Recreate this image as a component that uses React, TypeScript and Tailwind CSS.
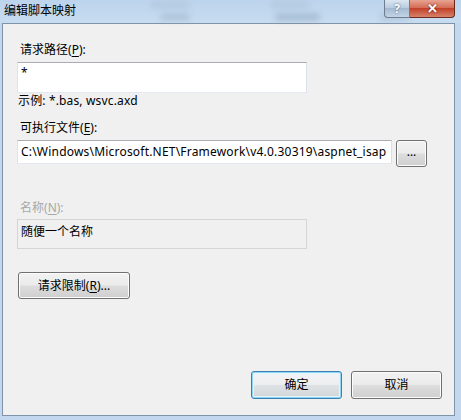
import type { ReactNode } from "react";

const font = {
  fontFamily: '"Noto Sans", "Noto Sans CJK SC", sans-serif',
};

function Mnemonic({ label, k, tail = "):" }: { label: string; k: string; tail?: string }) {
  return (
    <>
      {label}(<span className="underline underline-offset-2">{k}</span>
      {tail}
    </>
  );
}

function WinButton({
  children,
  primary,
  className = "",
}: {
  children: ReactNode;
  primary?: boolean;
  className?: string;
}) {
  const base = primary
    ? "border-[#3c7fb1] shadow-[inset_0_0_0_1px_#8fd6f4,inset_0_0_0_2px_#e3f4fb] bg-[linear-gradient(to_bottom,#f2f4f5_0%,#eceeef_48%,#dfe2e4_52%,#d2d6d9_100%)]"
    : "border-[#707070] shadow-[inset_0_0_0_1px_#fcfcfc] bg-[linear-gradient(to_bottom,#f2f2f2_0%,#ebebeb_48%,#dddddd_52%,#cfcfcf_100%)]";
  return (
    <button
      className={`flex items-center justify-center rounded-[3px] border text-[12px] text-black ${base} ${className}`}
    >
      {children}
    </button>
  );
}

export default function App() {
  return (
    <div
      className="relative flex h-[420px] w-[461px] flex-col overflow-hidden bg-[#c3d8ee]"
      style={font}
    >
      {/* title bar */}
      <div className="relative flex h-[23px] shrink-0 items-start bg-[linear-gradient(to_bottom,#bcd4ec,#c8dcf0)]">
        <div className="absolute left-[150px] top-[2px] h-[6px] w-[40px] rounded-full bg-[#9fb3c8] opacity-40 blur-[3px]" />
        <div className="absolute left-[270px] top-[2px] h-[6px] w-[40px] rounded-full bg-[#9fb3c8] opacity-40 blur-[3px]" />
        <div className="absolute left-[160px] top-[14px] h-[6px] w-[30px] rounded-full bg-[#8ea4bb] opacity-50 blur-[3px]" />
        <div className="absolute left-[275px] top-[14px] h-[6px] w-[45px] rounded-full bg-[#7d94ad] opacity-50 blur-[3px]" />
        <div className="absolute left-[380px] top-[14px] h-[6px] w-[30px] rounded-full bg-[#8ea4bb] opacity-40 blur-[3px]" />
        <span className="relative pl-[4px] pt-[3px] text-[12px] leading-[16px] text-black">
          编辑脚本映射
        </span>
        <div className="relative ml-auto mr-[6px] flex">
          <div className="flex h-[18px] w-[26px] items-center justify-center rounded-bl-[4px] border border-t-0 border-[#6d7d90] bg-[linear-gradient(to_bottom,#dbe6f2,#b7cadf_50%,#a5bad2_50%,#c3d4e6)] text-[12px] font-bold leading-none text-white [text-shadow:0_0_2px_#34485f]">
            ?
          </div>
          <div className="flex h-[18px] w-[45px] items-center justify-center rounded-br-[4px] border border-l-0 border-t-0 border-[#6a2a22] bg-[linear-gradient(to_bottom,#e8a493,#d2684f_50%,#c3412a_50%,#d8826a)] text-[13px] font-bold leading-none text-white [text-shadow:0_0_2px_#4a0e06]">
            ✕
          </div>
        </div>
      </div>

      {/* client area */}
      <div className="mb-[4px] ml-[2px] mr-[6px] flex flex-1 flex-col border border-[#8193a8] bg-[#f0f0f0] pl-[14px] text-[12px] leading-[16px] text-black">
        <div className="ml-[3px] mt-[18px]">
          <Mnemonic label="请求路径" k="P" />
        </div>
        <div className="mt-[4px] h-[31px] w-[290px] border border-[#abadb3] border-b-[#e3e9ef] border-l-[#e2e3ea] border-r-[#dbdfe6] bg-white px-[3px] pt-[2px]">
          *
        </div>
        <div className="ml-[1px] mt-[0px] tracking-[0.15px]">示例: *.bas, wsvc.axd</div>

        <div className="ml-[3px] mt-[11px]">
          <Mnemonic label="可执行文件" k="E" />
        </div>
        <div className="mt-[4px] flex items-start gap-[4px]">
          <div className="flex h-[24px] w-[375px] items-center overflow-hidden whitespace-nowrap border border-[#abadb3] border-b-[#e3e9ef] border-l-[#e2e3ea] border-r-[#dbdfe6] bg-white px-[3px] tracking-[0.2px]">
            C:\Windows\Microsoft.NET\Framework\v4.0.30319\aspnet_isap
          </div>
          <WinButton className="h-[27px] w-[31px] pb-[4px] text-[10px]">...</WinButton>
        </div>

        <div className="ml-[3px] mt-[33px] text-[#a8a8a8]">
          <Mnemonic label="名称" k="N" />
        </div>
        <div className="mt-[3px] h-[30px] w-[290px] border border-[#d5d5d5] bg-[#f0f0f0] px-[3px] pt-[4px]">
          随便一个名称
        </div>

        <WinButton className="ml-[1px] mt-[23px] h-[27px] w-[112px]">
          <Mnemonic label="请求限制" k="R" tail=")..." />
        </WinButton>

        <div className="mt-auto mb-[16px] flex justify-end gap-[9px] pr-[12px]">
          <WinButton primary className="h-[28px] w-[91px]">
            确定
          </WinButton>
          <WinButton className="h-[28px] w-[91px]">取消</WinButton>
        </div>
      </div>
    </div>
  );
}
